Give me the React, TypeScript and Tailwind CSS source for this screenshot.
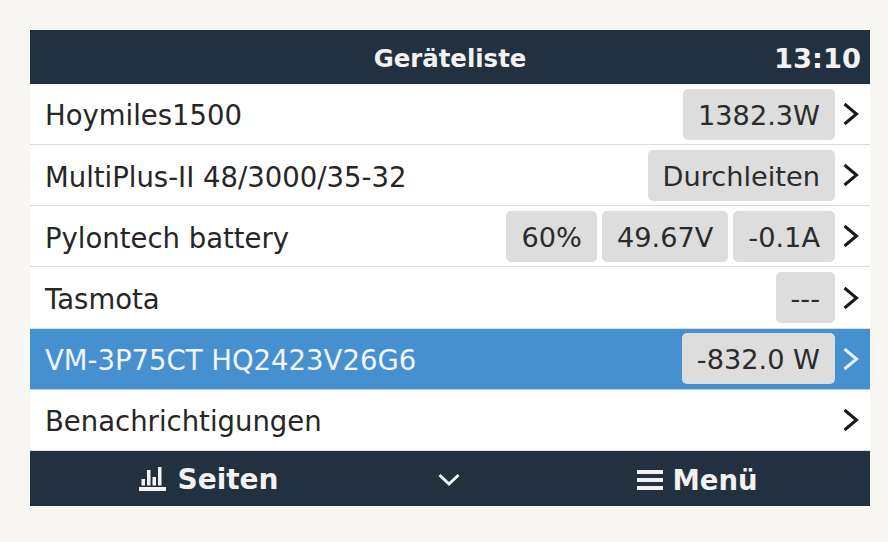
import React from "react";

type Row = { name: string; values: string[]; selected?: boolean };

const rows: Row[] = [
  { name: "Hoymiles1500", values: ["1382.3W"] },
  { name: "MultiPlus-II 48/3000/35-32", values: ["Durchleiten"] },
  { name: "Pylontech battery", values: ["60%", "49.67V", "-0.1A"] },
  { name: "Tasmota", values: ["---"] },
  { name: "VM-3P75CT HQ2423V26G6", values: ["-832.0 W"], selected: true },
  { name: "Benachrichtigungen", values: [] },
];

function Chevron({ selected }: { selected?: boolean }) {
  return (
    <svg width="16" height="24" viewBox="0 0 16 24" className="ml-[8px] shrink-0">
      <path
        d="M1.5 2 L13.5 12 L1.5 22"
        fill="none"
        stroke={selected ? "#e8f2fa" : "#1a1a1a"}
        strokeWidth="3"
      />
    </svg>
  );
}

function ListRow({ row }: { row: Row }) {
  return (
    <div
      className={`flex h-[61.17px] items-center pl-[15px] pr-[11px] border-b ${
        row.selected
          ? "bg-[#4790d0] border-[#a9cdea] text-[#f2f6fa]"
          : "bg-white border-[#dddddd] text-[#262626]"
      }`}
    >
      <span className="flex-1 whitespace-nowrap pt-[4px]">{row.name}</span>
      <div className="flex gap-[5px]">
        {row.values.map((value) => (
          <span
            key={value}
            className="flex h-[51px] items-center rounded-[5px] bg-[#dddddd] px-[15px] pt-[4px] text-[27.2px] text-[#2b2b2b]"
          >
            {value}
          </span>
        ))}
      </div>
      <Chevron selected={row.selected} />
    </div>
  );
}

export default function App() {
  return (
    <div className="flex h-[542px] w-[888px] items-start bg-[#f9f7f3] pl-[30px] pt-[30px] font-['DejaVu_Sans',sans-serif] text-[27.5px]">
      <div className="w-[840px]">
        <div className="relative flex h-[54px] items-center justify-center bg-[#223140] pt-[4px] text-[24.4px] font-bold text-[#f2f2f2]">
          Geräteliste
          <span className="absolute right-[9px] text-[27.3px]">13:10</span>
        </div>
        {rows.map((row) => (
          <ListRow key={row.name} row={row} />
        ))}
        <div className="flex h-[55px] items-center bg-[#223140] text-[28px] font-bold text-[#f2f2f2]">
          <div className="flex w-[358px] items-center justify-center gap-[11px] pt-[4px]">
            <svg width="27" height="24" viewBox="0 0 27 24" className="-mt-[3px]" fill="#f2f2f2">
              <rect x="0" y="20" width="27" height="4" />
              <rect x="2.5" y="12" width="3.5" height="6.5" />
              <rect x="8" y="3" width="3.5" height="15.5" />
              <rect x="13.5" y="10" width="3.5" height="8.5" />
              <rect x="19" y="0" width="3.5" height="18.5" />
            </svg>
            Seiten
          </div>
          <div className="flex w-[122px] justify-center pt-[4px]">
            <svg width="22" height="14" viewBox="0 0 22 14">
              <path d="M1.5 2 L11 11 L20.5 2" fill="none" stroke="#f2f2f2" strokeWidth="3" />
            </svg>
          </div>
          <div className="flex flex-1 items-center justify-center gap-[9px] pl-[15px] pt-[4px] text-[27.5px]">
            <svg width="26" height="22" viewBox="0 0 26 22">
              <path d="M0 3H26M0 11H26M0 19H26" stroke="#f2f2f2" strokeWidth="4" />
            </svg>
            Menü
          </div>
        </div>
      </div>
    </div>
  );
}
